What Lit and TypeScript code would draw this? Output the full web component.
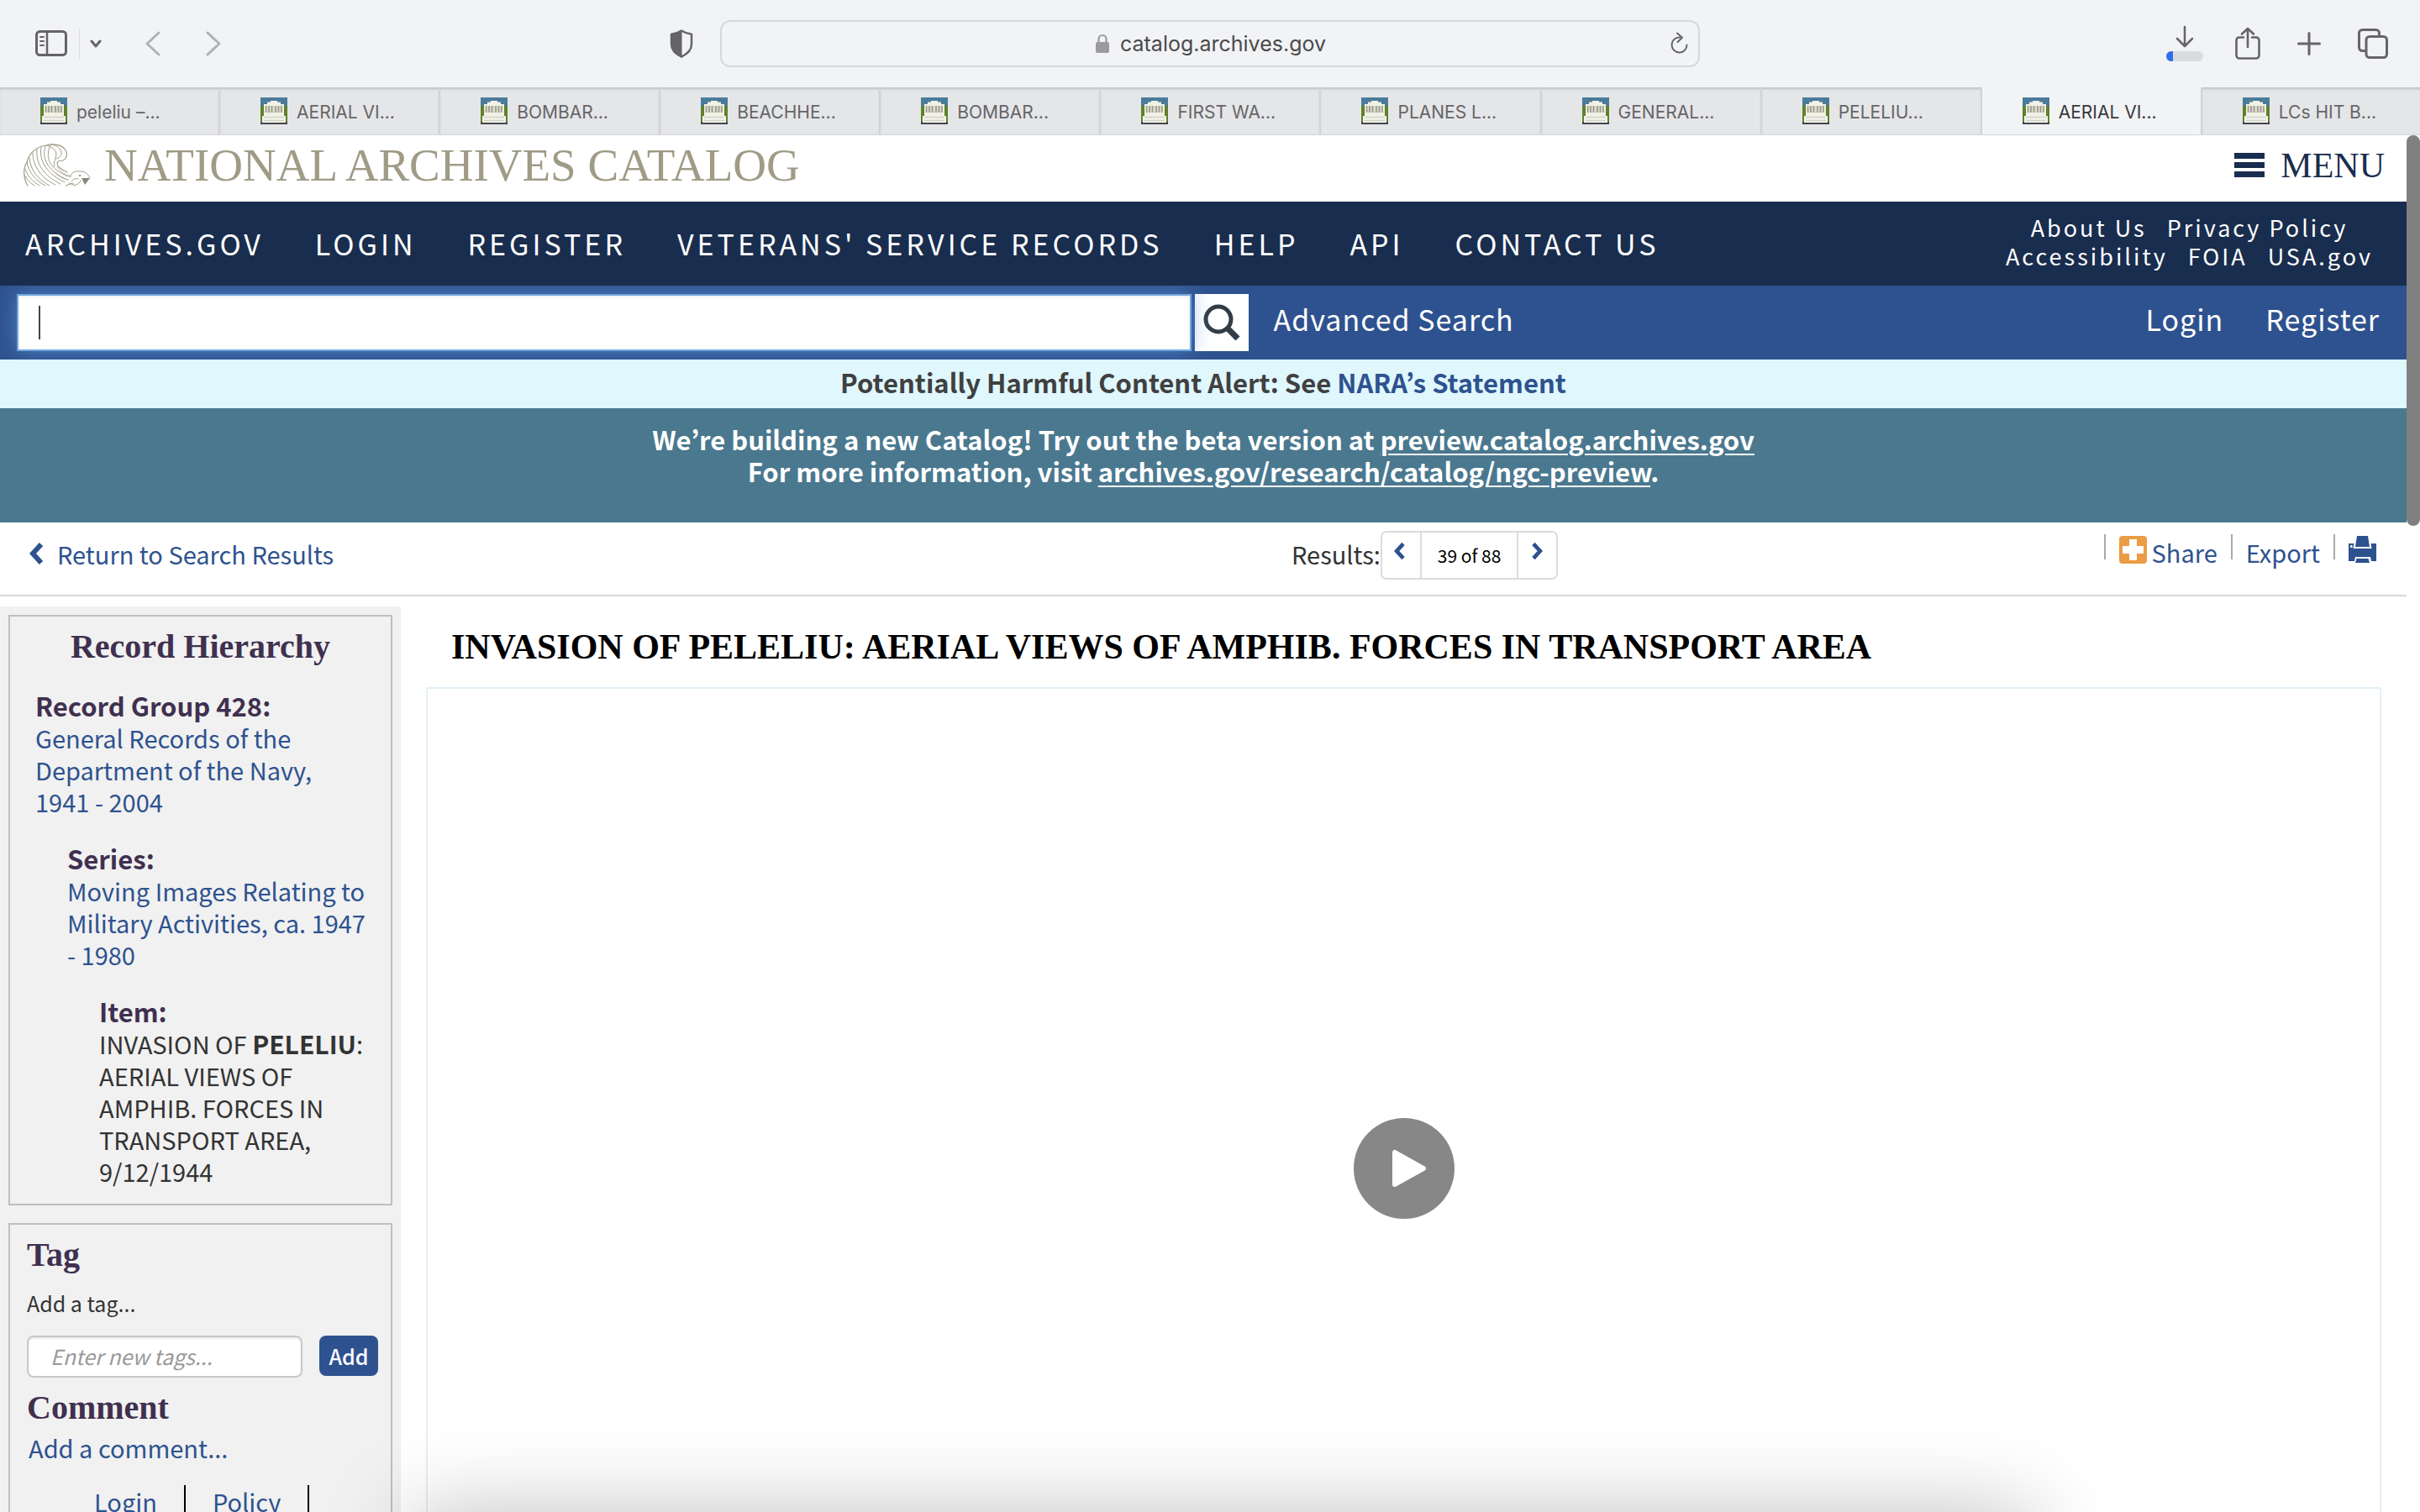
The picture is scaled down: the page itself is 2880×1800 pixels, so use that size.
import { LitElement, html, css, svg } from "lit";
import { customElement, property } from "lit/decorators.js";
import { classMap } from "lit/directives/class-map.js";

const TABS = [
  "peleliu –...",
  "AERIAL VI...",
  "BOMBAR...",
  "BEACHHE...",
  "BOMBAR...",
  "FIRST WA...",
  "PLANES L...",
  "GENERAL...",
  "PELELIU...",
  "AERIAL VI...",
  "LCs HIT B...",
];
const ACTIVE_TAB = 9;

const NAV = ["Archives.gov", "Login", "Register", "Veterans' Service Records", "Help", "API", "Contact Us"];
const SITE_LINKS = [
  ["About Us", "Privacy Policy"],
  ["Accessibility", "FOIA", "USA.gov"],
];

const favicon = html`<svg class="favicon" viewBox="0 0 32 32" aria-hidden="true">
  <rect width="32" height="32" fill="#4b7b9b" />
  <path d="M0 10h32v20H0z" fill="#5f8128" />
  <path d="M0 29h32v3H0z" fill="#43464a" />
  <path d="M12 4h8v1.500h4V8h4v14H4V8h4V5.500h4z" fill="#f1f1e6" />
  <path d="M6 10h20v8H6z" fill="#dcdccc" />
  <path d="M6.500 10v8M10 10v8M13.500 10v8M18 10v8M21.500 10v8M25 10v8" stroke="#9a9a8b" stroke-width="1.600" />
  <path d="M2 22h28v8H2z" fill="#f4f4ee" />
  <path d="M4 23.500h24M4 27.500h24" stroke="#cfcfc4" stroke-width="1.600" />
</svg>`;

const chevronPath = svg`<path d="M14 3 4 14l10 11" fill="none" stroke="currentColor" stroke-width="6" />`;

@customElement("browser-chrome")
class BrowserChrome extends LitElement {
  static styles = css`
    :host {
      display: block;
      background: #f2f3f5;
      font-family: Inter, Roboto, "Liberation Sans", sans-serif;
      color: #656567;
    }
    button {
      display: flex;
      align-items: center;
      padding: 0;
      border: 0;
      background: none;
      color: inherit;
      font: inherit;
    }
    svg {
      display: block;
      fill: none;
      stroke: currentColor;
      stroke-width: 3;
      stroke-linecap: round;
      stroke-linejoin: round;
    }
    .toolbar {
      display: grid;
      grid-template-columns: 1fr 40.5% 1fr;
      align-items: center;
      height: 104px;
    }
    .left {
      display: flex;
      align-items: center;
      padding: 0 32px 0 42px;
    }
    .rule {
      width: 1px;
      height: 36px;
      margin: 0 12px 0 14px;
      background: #dcdddf;
    }
    .history {
      display: flex;
      gap: 54px;
      margin-left: 52px;
      color: #b0b1b3;
    }
    .shield {
      margin-left: auto;
    }
    .address {
      display: grid;
      grid-template-columns: 1fr auto 1fr;
      align-items: center;
      height: 56px;
      padding: 0 12px 0 24px;
      box-sizing: border-box;
      border: 2px solid #d7d8da;
      border-radius: 12px;
    }
    .site {
      grid-column: 2;
      display: flex;
      align-items: center;
      gap: 12px;
    }
    .site input {
      width: 256px;
      padding: 0;
      border: 0;
      outline: 0;
      background: none;
      color: #4a4a4c;
      font: 25px/32px Inter, Roboto, "Liberation Sans", sans-serif;
    }
    .reload {
      justify-self: end;
    }
    .right {
      display: flex;
      align-items: center;
      justify-content: flex-end;
      gap: 38px;
      padding-right: 38px;
    }
    .right .plus {
      margin: 0 6px;
    }
    .tabs {
      display: grid;
      grid-auto-flow: column;
      grid-auto-columns: 9.1%;
      height: 56px;
      border-bottom: 1px solid #d4d5d7;
      overflow: hidden;
    }
    .tab {
      gap: 11px;
      padding-left: 48px;
      border-right: 2px solid #d2d3d5;
      background: #e5e6e8;
      box-shadow: inset 0 3px 3px -1px #bfc0c2;
      font-size: 21px;
      line-height: 32px;
      white-space: nowrap;
      overflow: hidden;
    }
    .tab span {
      padding-top: 3px;
    }
    .tab.active {
      background: #f2f3f5;
      box-shadow: none;
      color: #38383a;
    }
    .favicon {
      flex: none;
      width: 32px;
      height: 32px;
      stroke: none;
      stroke-linecap: butt;
    }
  `;

  render() {
    return html`
      <div class="toolbar">
        <div class="left">
          <button aria-label="Sidebar">
            <svg width="38" height="32" viewBox="0 0 38 32">
              <rect x="1.500" y="1.500" width="35" height="28" rx="4" />
              <path d="M14 2v27" stroke-width="2.500" />
              <path d="M6 8h4M6 13h4M6 18h4" stroke-width="2" />
            </svg>
          </button>
          <span class="rule"></span>
          <button aria-label="Tab groups">
            <svg width="14" height="10" viewBox="0 0 14 10"><path d="m2 2 5 6 5-6" /></svg>
          </button>
          <div class="history">
            <button aria-label="Back">
              <svg width="18" height="30" viewBox="0 0 18 30"><path d="M16 2 2 15l14 13" /></svg>
            </button>
            <button aria-label="Forward">
              <svg width="18" height="30" viewBox="0 0 18 30"><path d="m2 2 14 13L2 28" /></svg>
            </button>
          </div>
          <button class="shield" aria-label="Privacy report">
            <svg width="28" height="34" viewBox="0 0 28 34">
              <path d="M14 1.500c4 2.500 7 3.600 12 4.300v12c0 7-5 11.500-12 14.700C7 29.300 2 24.800 2 17.800v-12c5-.7 8-1.800 12-4.300z" stroke-width="2.500" />
              <path d="M14 1.500v31C7 29.300 2 24.800 2 17.800v-12c5-.7 8-1.800 12-4.300z" fill="currentColor" stroke-width="1" />
            </svg>
          </button>
        </div>
        <div class="address">
          <div class="site">
            <svg width="18" height="24" viewBox="0 0 18 24" color="#9b9b9d">
              <rect x="1" y="10" width="16" height="13" rx="2" fill="currentColor" stroke="none" />
              <path d="M4.500 11V6.500a4.500 4.500 0 0 1 9 0V11" stroke-width="2.200" />
            </svg>
            <input aria-label="Address" value="catalog.archives.gov" />
          </div>
          <button class="reload" aria-label="Reload">
            <svg width="22" height="28" viewBox="0 0 22 28">
              <path d="M12 6.500a9 9 0 1 0 8.500 9" stroke-width="2" />
              <path d="m9 1.500 6 5.200-5.500 5.300" stroke-width="2" />
            </svg>
          </button>
        </div>
        <div class="right">
          <button aria-label="Downloads">
            <svg width="44" height="44" viewBox="0 0 44 44">
              <path d="M22 2v22M13 16l9 9 9-9" stroke-width="2.500" />
              <rect x="0" y="31" width="44" height="12" rx="6" fill="#dadbdc" stroke="none" />
              <path d="M8 31H6a6 6 0 0 0 0 12h2z" fill="#2f6fed" stroke="none" />
            </svg>
          </button>
          <button aria-label="Share">
            <svg width="30" height="40" viewBox="0 0 30 40">
              <path d="M10 12.500H5a3.500 3.500 0 0 0-3.500 3.500v18A3.500 3.500 0 0 0 5 37.500h20a3.500 3.500 0 0 0 3.500-3.500V16a3.500 3.500 0 0 0-3.500-3.500h-5M15 24V2M8 8.500 15 2l7 6.500" stroke-width="2.600" />
            </svg>
          </button>
          <button class="plus" aria-label="New tab">
            <svg width="28" height="28" viewBox="0 0 28 28"><path d="M14 1.500v25M1.500 14h25" /></svg>
          </button>
          <button aria-label="Show all tabs">
            <svg width="36" height="36" viewBox="0 0 36 36">
              <rect x="10" y="9.500" width="24.500" height="25" rx="4" />
              <path d="M9 26.500H5.500a4 4 0 0 1-4-4v-17a4 4 0 0 1 4-4h16a4 4 0 0 1 4 4V9" />
            </svg>
          </button>
        </div>
      </div>
      <div class="tabs" role="tablist">
        ${TABS.map(
          (label, i) => html`<button
            role="tab"
            aria-selected=${i === ACTIVE_TAB}
            class=${classMap({ tab: true, active: i === ACTIVE_TAB })}
          >
            ${favicon}<span>${label}</span>
          </button>`
        )}
      </div>
    `;
  }
}

@customElement("hierarchy-level")
class HierarchyLevel extends LitElement {
  @property() label = "";

  static styles = css`
    :host {
      display: block;
    }
    .label {
      margin: 0;
      color: #40304f;
      font-size: 31px;
      font-weight: 700;
    }
  `;

  render() {
    return html`<h3 class="label">${this.label}</h3><slot></slot>`;
  }
}

@customElement("app-root")
class AppRoot extends LitElement {
  static styles = css`
    :host {
      position: relative;
      display: flex;
      flex-direction: column;
      height: 100vh;
      overflow: hidden;
      background: #fff;
      color: #333;
      font-family: "Noto Sans CJK KR", "Open Sans", sans-serif;
      font-size: 29px;
      line-height: 38px;
    }
    a {
      color: #2e528f;
      text-decoration: none;
    }
    button,
    input {
      font: inherit;
    }
    h1,
    h2 {
      margin: 0;
      font-family: "Liberation Serif", serif;
      font-weight: 700;
    }
    svg {
      display: block;
      flex: none;
    }
    .viewport {
      flex: 1;
      min-height: 0;
      display: flex;
      overflow: hidden;
    }
    .page {
      flex: 1;
      min-width: 0;
    }
    .scrollbar {
      flex: none;
      width: 16px;
    }
    .thumb {
      height: 28.4%;
      border-radius: 8px;
      background: #808080;
    }

    .masthead {
      display: flex;
      align-items: center;
      justify-content: space-between;
      height: 79px;
      padding: 0 26px 0 28px;
      font-family: "Liberation Serif", serif;
    }
    .brand {
      display: flex;
      align-items: center;
      gap: 14px;
      color: #9f9b86;
      font-size: 55px;
      line-height: 60px;
      padding-bottom: 8px;
    }
    .menu {
      display: flex;
      align-items: center;
      gap: 19px;
      padding: 0 0 8px;
      border: 0;
      background: none;
      color: #192d4e;
      font-size: 42px;
      line-height: 48px;
    }

    .nav {
      display: flex;
      align-items: center;
      justify-content: space-between;
      height: 100px;
      padding: 0 40px 0 30px;
      background: #192d4e;
    }
    .nav a {
      color: #fff;
    }
    .nav-main {
      display: flex;
      gap: 61px;
      font-size: 34px;
      letter-spacing: 4px;
      text-transform: uppercase;
    }
    .nav-site {
      padding-bottom: 4px;
      font-size: 27px;
      line-height: 34px;
      letter-spacing: 3px;
    }
    .nav-row {
      display: flex;
      justify-content: center;
      gap: 24px;
    }

    .search {
      display: flex;
      align-items: center;
      height: 88px;
      padding: 0 32px 0 20px;
      background: #2e528f;
      letter-spacing: 1px;
      font-size: 34px;
      overflow: hidden;
    }
    .search a {
      padding-bottom: 8px;
      color: #fff;
    }
    .query {
      position: relative;
      flex: 0 1 49.7%;
      min-width: 0;
      height: 68px;
    }
    .query input {
      display: block;
      width: 100%;
      height: 100%;
      box-sizing: border-box;
      padding: 0 26px;
      border: 2px solid #70a6df;
      outline: 0;
      background: #fff;
      box-shadow: 0 0 24px #66a0dd99, inset 0 2px 3px #0001;
    }
    .caret {
      position: absolute;
      left: 26px;
      top: 14px;
      width: 2px;
      height: 40px;
      background: #444;
    }
    .go {
      display: flex;
      align-items: center;
      justify-content: center;
      width: 64px;
      height: 68px;
      margin: 0 30px 0 4px;
      padding: 0;
      border: 0;
      background: #fff;
    }
    .account {
      display: flex;
      gap: 50px;
      margin-left: auto;
    }

    .alert {
      padding: 8px 0 12px;
      background: #dff7fd;
      color: #404040;
      font-size: 31px;
      font-weight: 700;
      text-align: center;
    }
    .beta {
      height: 118px;
      padding-top: 18px;
      background: #4a788f;
      color: #fff;
      font-size: 31px;
      font-weight: 700;
      text-align: center;
    }
    .beta p {
      margin: 0;
    }
    .beta a {
      color: #fff;
      text-decoration: underline;
      text-decoration-thickness: 2px;
      text-underline-offset: 4px;
    }

    .actions {
      display: grid;
      grid-template-columns: 1537fr 1327fr;
      align-items: start;
      height: 86px;
      border-bottom: 2px solid #d8d8d8;
    }
    .return {
      display: flex;
      align-items: center;
      gap: 14px;
      padding: 18px 0 0 35px;
    }
    .actions-right {
      display: flex;
      justify-content: space-between;
      padding: 10px 36px 0 0;
    }
    .results {
      display: flex;
      align-items: center;
    }
    .results > span {
      padding-bottom: 4px;
    }
    .pager {
      display: flex;
      height: 54px;
      border: 2px solid #dcdcdc;
      border-radius: 7px;
    }
    .pager button {
      width: 45px;
      padding: 0 14px 10px;
      border: 0;
      background: none;
      color: #2e528f;
    }
    .count {
      padding: 0 19px;
      border: solid #dcdcdc;
      border-width: 0 2px;
      color: #000;
      font-size: 21px;
      line-height: 54px;
    }
    .tools {
      display: flex;
      align-items: flex-start;
      padding-top: 6px;
    }
    .tools > * {
      position: relative;
      display: flex;
      gap: 6px;
      padding: 0 16px;
      border: 0;
      background: none;
      color: #2e528f;
    }
    .tools > *::before {
      content: "";
      width: 2px;
      height: 30px;
      margin: -2px 10px 0 -16px;
      background: #aaa;
    }
    .tools > :last-child {
      padding-right: 0;
    }

    .record {
      display: grid;
      grid-template-columns: minmax(0, 477fr) minmax(0, 2387fr);
      padding-top: 12px;
    }
    .sidebar {
      display: flex;
      flex-direction: column;
      gap: 21px;
      padding: 10px;
      background: #f1f1f1;
    }
    .card {
      padding: 12px 20px 20px;
      border: 2px solid #bebebe;
    }
    .card h2 {
      color: #40304f;
      font-size: 40px;
      line-height: 48px;
    }
    .hierarchy h2 {
      margin-bottom: 27px;
      text-align: center;
    }
    .levels {
      display: flex;
      flex-direction: column;
      gap: 30px;
      padding: 0 6px 0 10px;
    }
    .levels b {
      font-size: 30px;
    }
    .series {
      padding-left: 38px;
    }
    .item {
      padding-left: 76px;
    }
    .tag-label {
      display: block;
      margin: 14px 0 20px;
      font-size: 25px;
    }
    .tag-form {
      display: flex;
      gap: 20px;
      margin: 0 -5px 12px 0;
      font-size: 25px;
    }
    .tag-form input {
      flex: 1;
      min-width: 0;
      height: 50px;
      box-sizing: border-box;
      padding: 0 26px 2px;
      border: 2px solid #c8c8c8;
      border-radius: 8px;
      background: #fff;
      box-shadow: inset 0 2px 2px #00000013;
    }
    .tag-form input::placeholder {
      color: #999;
      font-style: italic;
      opacity: 1;
    }
    .tag-form button {
      width: 70px;
      height: 48px;
      padding: 0;
      border: 0;
      border-radius: 8px;
      background: #2e528f;
      color: #fff;
      font-weight: 500;
    }
    .comment {
      display: block;
      margin: 4px 0 26px 2px;
    }
    .policies {
      display: flex;
      margin: 0;
      padding: 0 0 0 80px;
      list-style: none;
    }
    .policies li {
      height: 64px;
      margin-right: 32px;
      padding-right: 32px;
      border-right: 2px solid #000;
    }
    .content {
      padding: 24px 30px 0;
    }
    h1 {
      padding: 0 30px;
      color: #000;
      font-size: 42px;
      line-height: 48px;
    }
    .video {
      display: flex;
      align-items: center;
      justify-content: center;
      margin-top: 24px;
      aspect-ratio: 2327 / 1146;
      box-sizing: border-box;
      border: 2px solid #e3f1f8;
    }
    .play {
      padding: 0;
      border: 0;
      background: none;
    }
    .under-shadow {
      position: absolute;
      top: 100%;
      left: 17%;
      right: 16%;
      height: 100px;
      box-shadow: 0 0 100px #00000040;
      pointer-events: none;
    }
  `;

  render() {
    return html`
      <browser-chrome></browser-chrome>
      <div class="viewport">
        <div class="page">
          ${this.renderHeader()} ${this.renderActions()}
          <div class="record">${this.renderSidebar()} ${this.renderContent()}</div>
        </div>
        <div class="scrollbar"><div class="thumb"></div></div>
      </div>
      <div class="under-shadow"></div>
    `;
  }

  renderHeader() {
    return html`
      <header>
        <div class="masthead">
          <a class="brand" href="#">
            <svg width="82" height="52" viewBox="0 0 82 52" fill="none" stroke="#9f9b86" stroke-width="1" stroke-linecap="round">
              <path d="M5 50C0 42-1 30 4 22 7 10 17 3 27 2c10-3 20 0 23 6 3 5 1 10-3 12-4 1-7 0-7 3 0 5 5 8 12 11" stroke-width="1.200" />
              <path d="M33 1c7 1 12 5 12 10 0 4-3 6-6 7M27 2c8 2 12 6 12 11-1 6-4 9-2 14" />
              <path d="M4 22c2 12 10 22 22 28M7 17c1 14 10 26 24 33M11 11c0 16 10 30 27 38M16 7c-2 17 9 32 28 41M21 4c-3 17 7 32 28 42M26 3c-5 16 4 30 26 40M32 2c-7 15-1 28 21 37" />
              <path d="M2 30c3 9 9 15 17 20M1 37c3 6 7 10 12 13" />
              <path d="M40 27c3 6 9 10 17 12M36 33c5 6 11 9 18 10" stroke-width=".7" />
              <path d="M55 40c1-5 6-8 12-7 6 0 10 3 12 8M57 45c2-3 5-4 8-3M60 50c4-1 7-3 8-6M54 47l6 2M50 50l9-3" />
              <path d="M69 41h10l-6 8z" fill="#8b8877" stroke="none" />
              <circle cx="67" cy="38" r=".8" fill="#8b8877" />
            </svg>
            <span>NATIONAL ARCHIVES CATALOG</span>
          </a>
          <button class="menu">
            <svg width="36" height="30" viewBox="0 0 36 30" fill="#192d4e"><path d="M0 0h36v7H0zM0 11h36v7H0zM0 22h36v7H0z" /></svg>
            <span>MENU</span>
          </button>
        </div>
        <nav class="nav">
          <div class="nav-main">${NAV.map((label) => html`<a href="#">${label}</a>`)}</div>
          <div class="nav-site">
            ${SITE_LINKS.map((row) => html`<div class="nav-row">${row.map((label) => html`<a href="#">${label}</a>`)}</div>`)}
          </div>
        </nav>
        <form class="search">
          <div class="query"><input type="text" aria-label="Search the catalog" /><span class="caret"></span></div>
          <button class="go" type="button" aria-label="Search">
            <svg width="44" height="44" viewBox="0 0 44 44" fill="none" stroke="#333d47">
              <circle cx="18" cy="18" r="15" stroke-width="5" />
              <path d="m29 29 12 12" stroke-width="7" />
            </svg>
          </button>
          <a href="#">Advanced Search</a>
          <div class="account"><a href="#">Login</a><a href="#">Register</a></div>
        </form>
        <div class="alert">Potentially Harmful Content Alert: See <a href="#">NARA’s Statement</a></div>
        <div class="beta">
          <p>We’re building a new Catalog! Try out the beta version at <a href="#">preview.catalog.archives.gov</a></p>
          <p>For more information, visit <a href="#">archives.gov/research/catalog/ngc-preview</a>.</p>
        </div>
      </header>
    `;
  }

  renderActions() {
    return html`
      <div class="actions">
        <a class="return" href="#">
          <svg width="19" height="28" viewBox="0 0 19 28" color="#2e528f">${chevronPath}</svg>
          Return to Search Results
        </a>
        <div class="actions-right">
          <div class="results">
            <span>Results:</span>
            <div class="pager">
              <button aria-label="Previous result">
                <svg width="15" height="22" viewBox="0 0 19 28">${chevronPath}</svg>
              </button>
              <span class="count">39 of 88</span>
              <button aria-label="Next result">
                <svg width="15" height="22" viewBox="0 0 19 28"><g transform="matrix(-1 0 0 1 19 0)">${chevronPath}</g></svg>
              </button>
            </div>
          </div>
          <div class="tools">
            <a href="#">
              <svg width="33" height="33" viewBox="0 0 33 33">
                <rect width="33" height="33" rx="4" fill="#eb9c45" />
                <path d="M12 4h9v8h8v9h-8v8h-9v-8H4v-9h8z" fill="#fff" />
              </svg>
              Share
            </a>
            <a href="#">Export</a>
            <button aria-label="Print">
              <svg width="33" height="32" viewBox="0 0 33 32" fill="#2e528f">
                <path d="M10 0h13l2 13H8z" />
                <path d="M0 9h6.500l-1 6h22l-1-6H33v21h-6l-1-5H8l-1 5H0z" />
                <path d="M9.500 27h14l1.500 5H8z" />
                <rect x="2" y="11" width="2.500" height="3" fill="#fff" />
              </svg>
            </button>
          </div>
        </div>
      </div>
    `;
  }

  renderSidebar() {
    return html`
      <aside class="sidebar">
        <section class="card hierarchy">
          <h2>Record Hierarchy</h2>
          <div class="levels">
            <hierarchy-level label="Record Group 428:">
              <a href="#">General Records of the Department of the Navy, 1941 - 2004</a>
            </hierarchy-level>
            <hierarchy-level class="series" label="Series:">
              <a href="#">Moving Images Relating to Military Activities, ca. 1947 - 1980</a>
            </hierarchy-level>
            <hierarchy-level class="item" label="Item:">
              INVASION OF <b>PELELIU</b>: AERIAL VIEWS OF AMPHIB. FORCES IN TRANSPORT AREA, 9/12/1944
            </hierarchy-level>
          </div>
        </section>
        <section class="card">
          <h2>Tag</h2>
          <label class="tag-label" for="tags">Add a tag...</label>
          <div class="tag-form">
            <input id="tags" type="text" placeholder="Enter new tags..." />
            <button>Add</button>
          </div>
          <h2>Comment</h2>
          <a class="comment" href="#">Add a comment...</a>
          <ul class="policies">
            <li><a href="#">Login</a></li>
            <li><a href="#">Policy</a></li>
          </ul>
        </section>
      </aside>
    `;
  }

  renderContent() {
    return html`
      <main class="content">
        <h1>INVASION OF PELELIU: AERIAL VIEWS OF AMPHIB. FORCES IN TRANSPORT AREA</h1>
        <div class="video">
          <button class="play" aria-label="Play video">
            <svg width="120" height="120" viewBox="0 0 120 120">
              <circle cx="60" cy="60" r="60" fill="#878787" />
              <path d="M49 41v38l34-19z" fill="#fff" stroke="#fff" stroke-width="6" stroke-linejoin="round" />
            </svg>
          </button>
        </div>
      </main>
    `;
  }
}
